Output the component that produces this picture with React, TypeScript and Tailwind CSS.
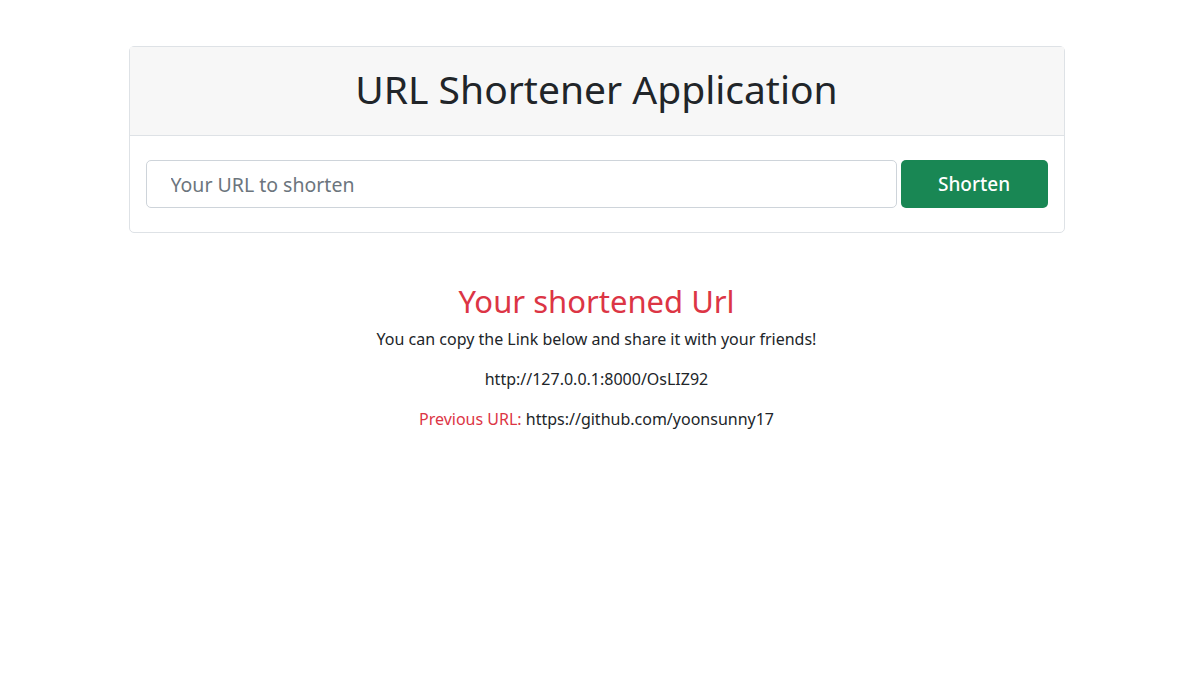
export default function App() {
  const font = { fontFamily: '"Noto Sans", "Open Sans", "Noto Sans CJK KR", sans-serif' };
  return (
    <div className="min-h-[691px] w-full bg-white text-[#212529]" style={font}>
      <div className="mx-auto w-[960px] px-3 pt-[46px]">
        <div className="rounded-[5px] border border-[#dee2e6]">
          <div className="flex h-[89px] items-center justify-center border-b border-[#dee2e6] bg-[#f7f7f7] pb-[4px]">
            <h1 className="text-[39px] leading-[48px] font-normal text-[#212529]">URL Shortener Application</h1>
          </div>
          <div className="flex gap-1 px-4 pt-6 pb-6">
            <input
              className="h-12 flex-1 rounded-[5px] border border-[#ced4da] pl-6 text-[19.5px] text-[#212529] outline-none placeholder:text-[#6c757d]"
              placeholder="Your URL to shorten"
              style={font}
            />
            <button className="h-12 w-[147px] rounded-[5px] bg-[#198754] text-[19px] font-medium text-white" style={font}>Shorten</button>
          </div>
        </div>
        <div className="mt-[48px] flex flex-col items-center text-center">
          <h2 className="text-[31px] leading-[40px] font-normal text-[#dc3545]">Your shortened Url</h2>
          <p className="mt-[6px] text-[16px] leading-6">You can copy the Link below and share it with your friends!</p>
          <p className="mt-4 text-[16px] leading-6">http://127.0.0.1:8000/OsLIZ92</p>
          <p className="mt-4 text-[16px] leading-6">
            <span className="text-[#dc3545]">Previous URL: </span>
            https://github.com/yoonsunny17
          </p>
        </div>
      </div>
    </div>
  );
}
